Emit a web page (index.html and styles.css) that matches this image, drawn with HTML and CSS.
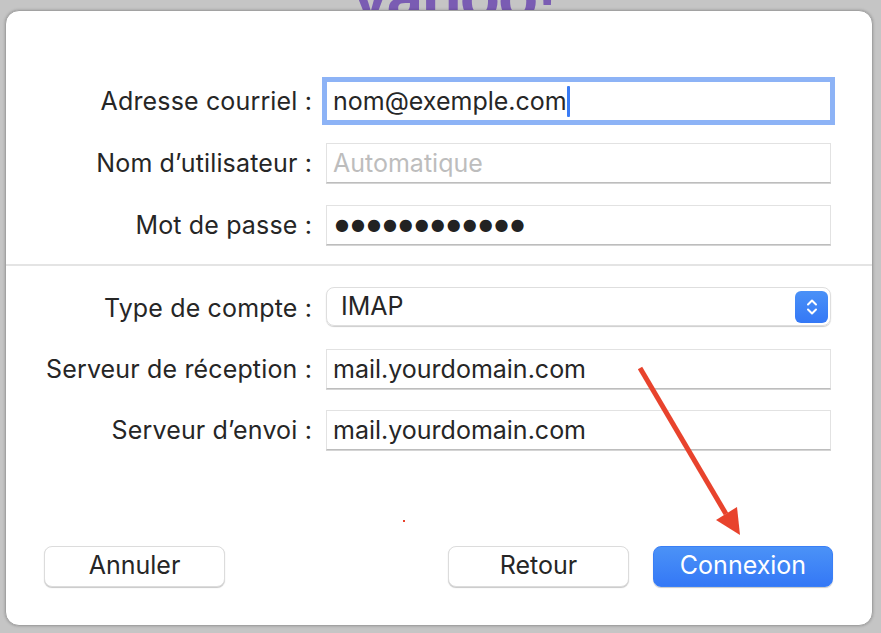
FILE: index.html
```html
<!DOCTYPE html>
<html lang="fr">

<head>
    <meta charset="UTF-8">
    <meta name="viewport" content="width=device-width, initial-scale=1.0">
    <title>Compte de messagerie</title>
    <link rel="stylesheet" href="styles.css">
</head>

<body>
    <div class="logo">yahoo!</div>

    <div class="dialog">
        <div class="form">
            <label class="label">Adresse courriel :</label>
            <div class="field focus">nom@exemple.com<span class="caret"></span></div>

            <label class="label">Nom d’utilisateur :</label>
            <div class="field placeholder">Automatique</div>

            <label class="label">Mot de passe :</label>
            <div class="field dots">●●●●●●●●●●●●</div>
        </div>

        <div class="divider"></div>

        <div class="form form2">
            <label class="label">Type de compte :</label>
            <div class="select">
                IMAP
                <span class="stepper">
                    <svg width="14" height="22" viewBox="0 0 14 22">
                        <path d="M3 8.5 L7 4.5 L11 8.5" fill="none" stroke="#fff" stroke-width="2" stroke-linecap="round" stroke-linejoin="round" />
                        <path d="M3 13.5 L7 17.5 L11 13.5" fill="none" stroke="#fff" stroke-width="2" stroke-linecap="round" stroke-linejoin="round" />
                    </svg>
                </span>
            </div>

            <label class="label">Serveur de réception :</label>
            <div class="field">mail.yourdomain.com</div>

            <label class="label">Serveur d’envoi :</label>
            <div class="field">mail.yourdomain.com</div>
        </div>

        <div class="buttons">
            <button class="btn">Annuler</button>
            <span class="spacer"></span>
            <button class="btn">Retour</button>
            <button class="btn primary">Connexion</button>
        </div>

        <!-- annotation -->
        <svg class="arrow" width="881" height="633" viewBox="0 0 881 633">
            <line x1="640" y1="368" x2="726" y2="514" stroke="#e8432d" stroke-width="5" />
            <polygon points="740,535 716,520 737,507" fill="#e8432d" />
            <rect x="403" y="520" width="2" height="2" fill="#e8432d" />
        </svg>
    </div>
</body>

</html>
```

FILE: styles.css
```css
* {
    padding: 0;
    margin: 0;
    box-sizing: border-box;
}

body {
    width: 881px;
    height: 633px;
    overflow: hidden;
    background-color: #c5c5c5;
    font-family: Inter, "Liberation Sans", sans-serif;
    color: #262626;
    padding: 10px 8px 7px 5px;
}

.logo {
    position: absolute;
    left: 352px;
    top: -42px;
    font-family: "Liberation Sans", sans-serif;
    font-weight: bold;
    font-size: 66px;
    letter-spacing: -2px;
    color: #7a5cb3;
}

.dialog {
    position: relative;
    width: 868px;
    height: 616px;
    background-color: #fff;
    border: 1px solid #a2a2a2;
    border-radius: 14px;
    box-shadow: 0 0 3px rgba(0, 0, 0, 0.25);
    padding-top: 70px;
}

.form {
    display: grid;
    grid-template-columns: 307px 505px;
    grid-auto-rows: 40px;
    column-gap: 13px;
    row-gap: 22px;
}

.form2 {
    row-gap: 21px;
}

.label {
    font-size: 25px;
    letter-spacing: 0.15px;
    text-align: right;
    line-height: 40px;
    padding-right: 1px;
}

.field {
    position: relative;
    border: 1px solid #e2e2e2;
    border-bottom-color: #bdbdbd;
    box-shadow: 0 1px 0 #d4d4d4;
    font-size: 25px;
    line-height: 38px;
    padding-left: 6px;
    white-space: nowrap;
}

.focus {
    outline: 4px solid #8db3f6;
    outline-offset: 0;
    border-color: #8db3f6;
}

.caret {
    display: inline-block;
    width: 3px;
    height: 31px;
    background-color: #3a7cf5;
    border-radius: 1px;
    vertical-align: middle;
    margin-top: -4px;
}

.placeholder {
    color: #bdbdbd;
}

.dots {
    font-family: "DejaVu Sans", sans-serif;
    font-size: 16px;
    letter-spacing: 2px;
    color: #222;
    padding-left: 8px;
}

.divider {
    height: 2px;
    background-color: #e4e4e4;
    margin: 19px 0 22px;
}

.select {
    position: relative;
    border: 1px solid #dedede;
    border-radius: 8px;
    box-shadow: 0 1px 1px rgba(0, 0, 0, 0.2);
    font-size: 25px;
    line-height: 37px;
    padding-left: 14px;
    margin-top: -1px;
    height: 39px;
}

.stepper {
    position: absolute;
    right: 2px;
    top: 3px;
    width: 33px;
    height: 32px;
    border-radius: 6px;
    background: linear-gradient(#4a91f7, #3478f6);
    display: flex;
    align-items: center;
    justify-content: center;
}

.buttons {
    display: flex;
    gap: 24px;
    padding: 0 39px 0 38px;
    margin-top: 96px;
}

.spacer {
    flex: 1;
}

.btn {
    width: 181px;
    height: 41px;
    border: 1px solid #dcdcdc;
    border-radius: 8px;
    background-color: #fff;
    box-shadow: 0 1px 1px rgba(0, 0, 0, 0.22);
    font-family: Inter, "Liberation Sans", sans-serif;
    font-size: 25px;
    color: #262626;
    padding-bottom: 3px;
}

.btn.primary {
    width: 180px;
    border-color: #3a7ff6;
    background: linear-gradient(#4b92f7, #3478f6);
    color: #fff;
}

.arrow {
    position: absolute;
    left: -6px;
    top: -11px;
    pointer-events: none;
}
```
